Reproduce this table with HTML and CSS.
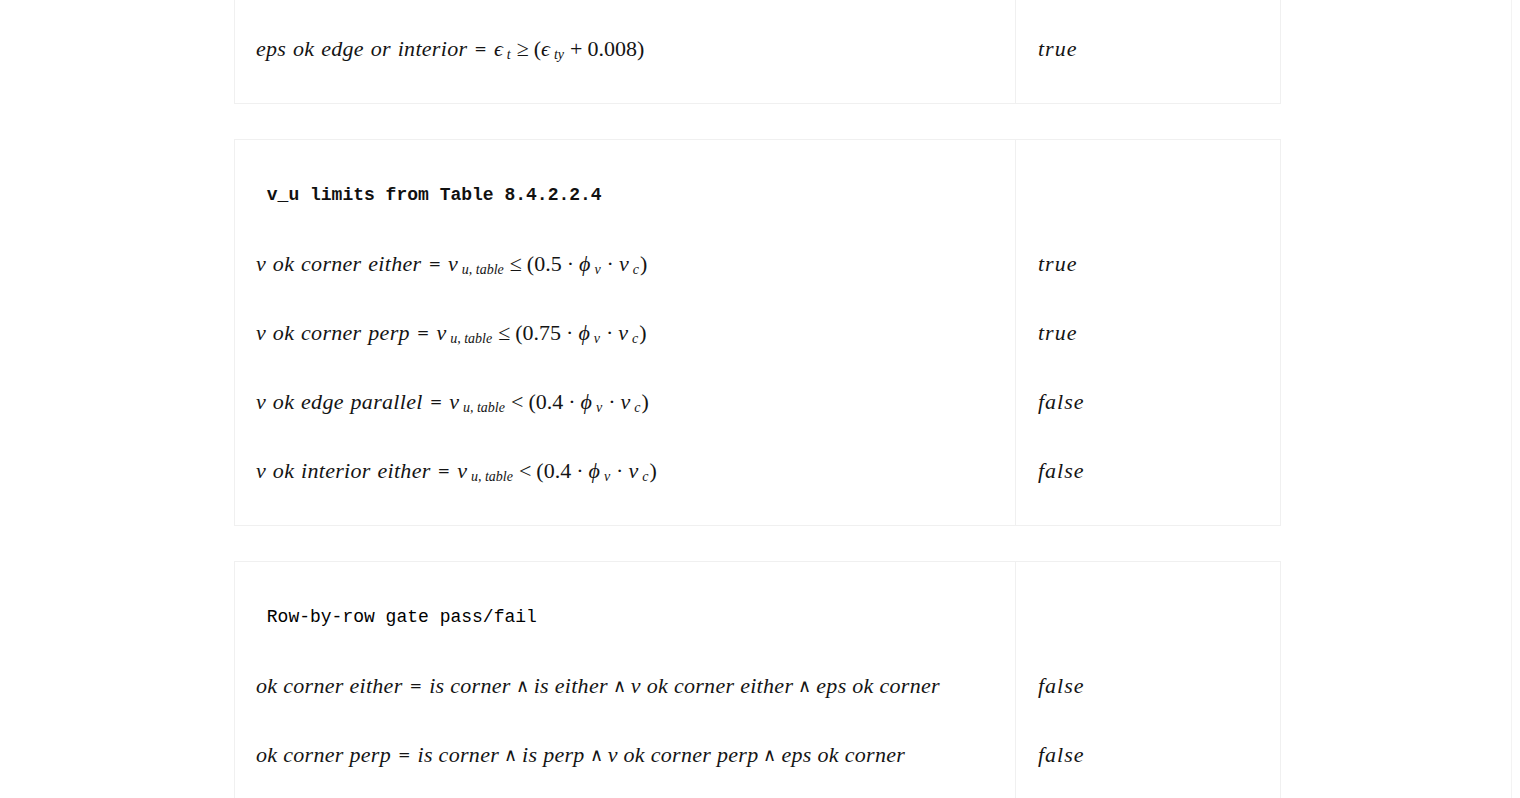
FILE: index.html
```html
<!DOCTYPE html>
<html>
<head>
<meta charset="utf-8">
<link rel="stylesheet" href="styles.css">
</head>
<body>
<div class="page">
  <div class="stack">
    <div class="card">
      <div class="col main">
        <div class="row"><span class="v">eps ok edge or interior</span><span class="eq">=</span><span class="mi">ϵ</span><span class="sb">t</span><span class="op">≥</span><span class="n">(</span><span class="mi">ϵ</span><span class="sb">ty</span><span class="op">+</span><span class="n">0.008)</span></div>
      </div>
      <div class="col side">
        <div class="row"><span class="val">true</span></div>
      </div>
    </div>

    <div class="card">
      <div class="col main">
        <div class="row"><span class="code bold"> v_u limits from Table 8.4.2.2.4</span></div>
        <div class="row"><span class="v">v ok corner either</span><span class="eq">=</span><span class="mi">v</span><span class="sb">u, table</span><span class="op">≤</span><span class="n">(0.5</span><span class="op">·</span><span class="mi">ϕ</span><span class="sb">v</span><span class="op">·</span><span class="mi">v</span><span class="sb">c</span><span class="n">)</span></div>
        <div class="row"><span class="v">v ok corner perp</span><span class="eq">=</span><span class="mi">v</span><span class="sb">u, table</span><span class="op">≤</span><span class="n">(0.75</span><span class="op">·</span><span class="mi">ϕ</span><span class="sb">v</span><span class="op">·</span><span class="mi">v</span><span class="sb">c</span><span class="n">)</span></div>
        <div class="row"><span class="v">v ok edge parallel</span><span class="eq">=</span><span class="mi">v</span><span class="sb">u, table</span><span class="op">&lt;</span><span class="n">(0.4</span><span class="op">·</span><span class="mi">ϕ</span><span class="sb">v</span><span class="op">·</span><span class="mi">v</span><span class="sb">c</span><span class="n">)</span></div>
        <div class="row"><span class="v">v ok interior either</span><span class="eq">=</span><span class="mi">v</span><span class="sb">u, table</span><span class="op">&lt;</span><span class="n">(0.4</span><span class="op">·</span><span class="mi">ϕ</span><span class="sb">v</span><span class="op">·</span><span class="mi">v</span><span class="sb">c</span><span class="n">)</span></div>
      </div>
      <div class="col side">
        <div class="row"></div>
        <div class="row"><span class="val">true</span></div>
        <div class="row"><span class="val">true</span></div>
        <div class="row"><span class="val">false</span></div>
        <div class="row"><span class="val">false</span></div>
      </div>
    </div>

    <div class="card">
      <div class="col main">
        <div class="row"><span class="code dark"> Row-by-row gate pass/fail</span></div>
        <div class="row"><span class="t">ok corner either</span><span class="eq">=</span><span class="t">is corner</span><span class="and">∧</span><span class="t">is either</span><span class="and">∧</span><span class="t">v ok corner either</span><span class="and">∧</span><span class="t">eps ok corner</span></div>
        <div class="row"><span class="t">ok corner perp</span><span class="eq">=</span><span class="t">is corner</span><span class="and">∧</span><span class="t">is perp</span><span class="and">∧</span><span class="t">v ok corner perp</span><span class="and">∧</span><span class="t">eps ok corner</span></div>
      </div>
      <div class="col side">
        <div class="row"></div>
        <div class="row"><span class="val">false</span></div>
        <div class="row"><span class="val">false</span></div>
      </div>
    </div>
  </div>
</div>
</body>
</html>
```

FILE: styles.css
```css
html, body {
  margin: 0;
  padding: 0;
  background: #ffffff;
}

body {
  font-family: "Liberation Serif", "DejaVu Serif", serif;
  color: #141414;
  overflow: hidden;
}

.page {
  width: 1511px;
  height: 798px;
  border-right: 1px solid #f3f3f3;
  overflow: hidden;
}

.stack {
  width: 1047px;
  margin-left: 234px;
  margin-top: -7px;
  display: flex;
  flex-direction: column;
  gap: 35px;
}

.card {
  display: flex;
  border: 1px solid #f0f0f0;
}

.col {
  box-sizing: border-box;
  padding: 20px 0;
  display: flex;
  flex-direction: column;
}

.main {
  width: 781px;
  border-right: 1px solid #f0f0f0;
  padding-left: 21px;
}

.side {
  flex: 1;
  padding-left: 22px;
}

.row {
  height: 69px;
  display: flex;
  align-items: center;
  white-space: nowrap;
  font-size: 22px;
}

.v {
  font-style: italic;
  letter-spacing: 0.3px;
  word-spacing: 1px;
}

.t {
  font-style: italic;
  letter-spacing: 0.3px;
}

.mi {
  font-style: italic;
}

.eq {
  font-family: "DejaVu Sans", sans-serif;
  font-size: 15px;
  margin: 0 7px;
}

.op {
  margin: 0 5px;
}

.and {
  font-family: "DejaVu Sans", sans-serif;
  font-size: 18px;
  font-weight: 300;
  margin: 0 5px;
}

.sb {
  font-style: italic;
  font-size: 14px;
  position: relative;
  top: 6px;
  margin-left: 4px;
  margin-right: 1px;
}

.val {
  font-style: italic;
  letter-spacing: 1px;
}

.code {
  font-family: "Liberation Mono", "DejaVu Sans Mono", monospace;
  font-size: 18px;
  white-space: pre;
  color: #111;
}

.bold {
  font-weight: bold;
}

.dark {
  color: #000;
}
```
